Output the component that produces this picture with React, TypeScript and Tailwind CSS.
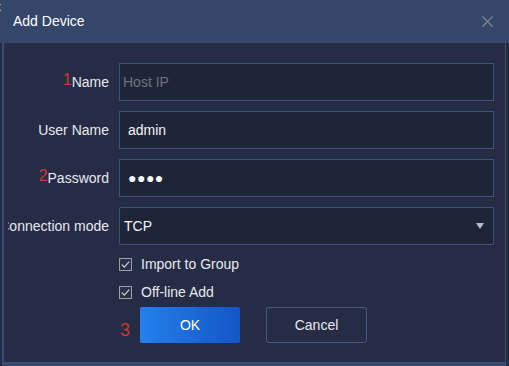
import React from "react";

const font = { fontFamily: '"Liberation Sans", Arial, sans-serif' };

function Label({ num, text }: { num?: string; text: string }) {
  return (
    <div className="flex w-[111px] shrink-0 items-center justify-end overflow-hidden whitespace-nowrap pr-[10px] text-[14px] text-[#e6e9ef]">
      {num && <span className="relative -top-[2px] text-[16px] leading-none text-[#cf3a2c]">{num}</span>}
      <span className="shrink-0">{text}</span>
    </div>
  );
}

function Check({ text }: { text: string }) {
  return (
    <div className="flex h-[28px] items-center gap-[9px]">
      <div className="flex h-[13px] w-[13px] items-center justify-center border border-[#9aa0ab] bg-[#2a3149]">
        <svg width="11" height="11" viewBox="0 0 11 11">
          <path d="M1.8 5.6 L4.3 8.1 L9.2 2.6" fill="none" stroke="#c9ccd3" strokeWidth="1.3" />
        </svg>
      </div>
      <span className="text-[14px] text-[#e6e9ef]">{text}</span>
    </div>
  );
}

export default function App() {
  return (
    <div style={font} className="relative flex h-[366px] w-[509px] flex-col overflow-hidden bg-[#34466a]">
      <span className="absolute -left-[5px] top-[1px] text-[12px] leading-none text-[#e6e9ef]">x</span>
      <div className="flex h-[43px] shrink-0 items-center justify-between pl-[13px] pr-[16px]">
        <span className="text-[14px] text-white">Add Device</span>
        <svg width="11" height="11" viewBox="0 0 11 11">
          <path d="M0.5 0.5 L10.5 10.5 M10.5 0.5 L0.5 10.5" stroke="#7f8794" strokeWidth="1.2" />
        </svg>
      </div>
      <div className="flex flex-1 border-l-[2px] border-r-[3px] border-[#232b40] pb-[2px]">
        <div className="flex flex-1 flex-col border-b-[2px] border-l-[2px] border-r-[1px] border-[#3a4c72] bg-[#262c45] pb-[2px] pt-[20px]">
          <div className="ml-[4px] flex flex-col gap-[10px]">
            <div className="flex h-[38px] items-center">
              <Label num="1" text="Name" />
              <div className="flex h-[38px] w-[375px] items-center border border-[#3f5178] bg-[#1f2538] px-[3px] text-[14px] text-[#6f7480]">
                Host IP
              </div>
            </div>
            <div className="flex h-[38px] items-center">
              <Label text="User Name" />
              <div className="flex h-[38px] w-[375px] items-center border border-[#3f5178] bg-[#1f2538] px-[8px] text-[14px] text-[#f2f4f7]">
                admin
              </div>
            </div>
            <div className="flex h-[38px] items-center">
              <Label num="2" text="Password" />
              <div className="flex h-[38px] w-[375px] items-center border border-[#3f5178] bg-[#1f2538] px-[8px] text-[14px] tracking-[0.5px] text-white">
                ●●●●
              </div>
            </div>
            <div className="flex h-[38px] items-center">
              <Label text="Connection mode" />
              <div className="flex h-[38px] w-[375px] items-center justify-between rounded-[2px] border border-[#3f5178] bg-[#1f2538] pl-[4px] pr-[9px] text-[14px] text-[#f2f4f7]">
                <span>TCP</span>
                <svg width="8" height="6" viewBox="0 0 8 6">
                  <path d="M0 0 L8 0 L4 6 Z" fill="#b9bcc4" />
                </svg>
              </div>
            </div>
          </div>
          <div className="ml-[115px] mt-[5px] flex flex-col">
            <Check text="Import to Group" />
            <Check text="Off-line Add" />
            <div className="mt-[1px] flex items-center">
              <span className="w-[21px] pl-[1px] pt-[9px] text-[18px] leading-none text-[#c9392b]">3</span>
              <button className="h-[36px] w-[100px] rounded-[2px] bg-gradient-to-r from-[#2480ec] to-[#1356c6] text-[14px] text-white">
                OK
              </button>
              <button className="ml-[26px] h-[36px] w-[101px] rounded-[3px] border border-[#4a5b82] text-[14px] text-[#e6e9ef]">
                Cancel
              </button>
            </div>
          </div>
        </div>
      </div>
    </div>
  );
}
